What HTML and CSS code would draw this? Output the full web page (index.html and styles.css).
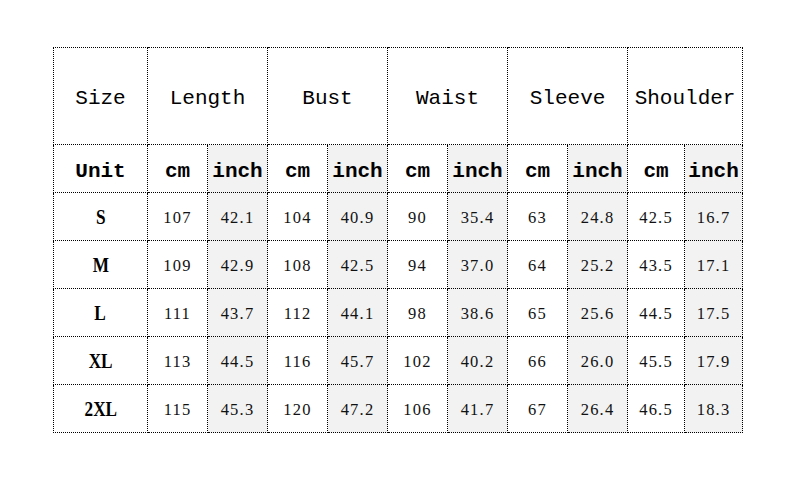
FILE: index.html
```html
<!DOCTYPE html>
<html>
<head>
<meta charset="utf-8">
<link rel="stylesheet" href="styles.css">
</head>
<body>
<div class="wrap">
<table class="chart">
  <colgroup>
    <col class="c-size">
    <col class="c-std"><col class="c-std">
    <col class="c-std"><col class="c-std">
    <col class="c-std"><col class="c-std">
    <col class="c-std"><col class="c-std">
    <col class="c-sh1"><col class="c-sh2">
  </colgroup>
  <tr class="head">
    <td>Size</td>
    <td colspan="2">Length</td>
    <td colspan="2">Bust</td>
    <td colspan="2">Waist</td>
    <td colspan="2">Sleeve</td>
    <td colspan="2">Shoulder</td>
  </tr>
  <tr class="unit">
    <td>Unit</td>
    <td>cm</td><td class="g">inch</td>
    <td>cm</td><td class="g">inch</td>
    <td>cm</td><td class="g">inch</td>
    <td>cm</td><td class="g">inch</td>
    <td>cm</td><td class="g">inch</td>
  </tr>
  <tr class="row">
    <td class="sz"><span>S</span></td>
    <td>107</td><td class="g">42.1</td>
    <td>104</td><td class="g">40.9</td>
    <td>90</td><td class="g">35.4</td>
    <td>63</td><td class="g">24.8</td>
    <td>42.5</td><td class="g">16.7</td>
  </tr>
  <tr class="row">
    <td class="sz"><span>M</span></td>
    <td>109</td><td class="g">42.9</td>
    <td>108</td><td class="g">42.5</td>
    <td>94</td><td class="g">37.0</td>
    <td>64</td><td class="g">25.2</td>
    <td>43.5</td><td class="g">17.1</td>
  </tr>
  <tr class="row">
    <td class="sz"><span>L</span></td>
    <td>111</td><td class="g">43.7</td>
    <td>112</td><td class="g">44.1</td>
    <td>98</td><td class="g">38.6</td>
    <td>65</td><td class="g">25.6</td>
    <td>44.5</td><td class="g">17.5</td>
  </tr>
  <tr class="row">
    <td class="sz"><span>XL</span></td>
    <td>113</td><td class="g">44.5</td>
    <td>116</td><td class="g">45.7</td>
    <td>102</td><td class="g">40.2</td>
    <td>66</td><td class="g">26.0</td>
    <td>45.5</td><td class="g">17.9</td>
  </tr>
  <tr class="row">
    <td class="sz"><span>2XL</span></td>
    <td>115</td><td class="g">45.3</td>
    <td>120</td><td class="g">47.2</td>
    <td>106</td><td class="g">41.7</td>
    <td>67</td><td class="g">26.4</td>
    <td>46.5</td><td class="g">18.3</td>
  </tr>
</table>
</div>
</body>
</html>
```

FILE: styles.css
```css
html, body {
  margin: 0;
  padding: 0;
  background: #ffffff;
}

.wrap {
  padding: 47px 0 0 53px;
}

.chart {
  border-collapse: collapse;
  table-layout: fixed;
  width: 690px;
}

.chart td {
  border: 1px dotted #000;
  padding: 0;
  text-align: center;
  vertical-align: middle;
  color: #111;
}

.c-size { width: 94px; }
.c-std { width: 60px; }
.c-sh1 { width: 57px; }
.c-sh2 { width: 58px; }

.head td {
  height: 92px;
  font-family: "Liberation Mono", "DejaVu Sans Mono", monospace;
  font-size: 21px;
  color: #000;
  padding-top: 4px;
}

.unit td {
  height: 41px;
  font-family: "Liberation Mono", "DejaVu Sans Mono", monospace;
  font-size: 21px;
  font-weight: bold;
  color: #000;
  padding-top: 6px;
}

.row td {
  height: 45px;
  font-family: "Liberation Serif", "Times New Roman", serif;
  font-size: 16.5px;
  letter-spacing: 1.2px;
  padding-top: 2px;
}

.row td.sz {
  font-weight: bold;
  font-size: 21px;
  color: #000;
  letter-spacing: 0;
}

.sz span {
  display: inline-block;
  transform: scaleX(0.82);
}

.chart td.g {
  background: #f2f2f2;
}
```
